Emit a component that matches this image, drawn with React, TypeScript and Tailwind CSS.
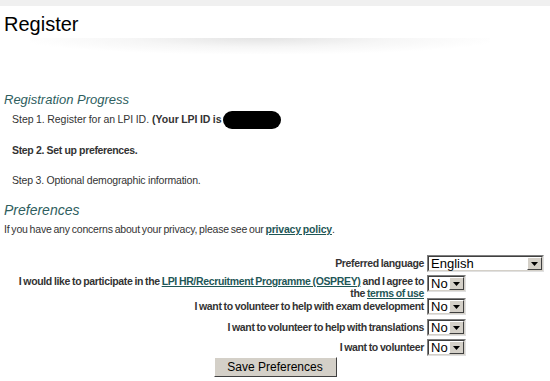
import React from "react";

function Sel({ value, w }: { value: string; w: number }) {
  return (
    <div
      className="flex h-[17px] border border-t-[#808080] border-l-[#808080] border-b-[#e0e0e0] border-r-[#e0e0e0] bg-white font-normal [letter-spacing:0] [word-spacing:0]"
      style={{ width: w }}
    >
      <div className="flex flex-1 items-center border border-t-[#404040] border-l-[#404040] border-b-[#d4d0c8] border-r-[#d4d0c8] pl-[2px] text-[13px] leading-none text-black">
        <span className="flex-1">{value}</span>
        <div className="flex h-full w-[15px] items-center justify-center border border-t-[#ffffff] border-l-[#ffffff] border-b-[#404040] border-r-[#404040] bg-[#d4d0c8]">
          <svg width="7" height="4" viewBox="0 0 7 4">
            <path d="M0 0h7L3.5 4z" fill="#000" />
          </svg>
        </div>
      </div>
    </div>
  );
}

export default function App() {
  const link = "text-[#1f5757] underline";
  return (
    <div className="h-[381px] w-[550px] overflow-hidden bg-white text-[#333] [font-family:'Liberation_Sans',Arial,sans-serif]">
      <div className="h-[6px] bg-[#f0f0f0]" />
      <div className="flex h-[32px] items-center pl-[4px] pt-[3px] text-[20px] text-black">Register</div>
      <div className="ml-[30px] h-[16px] w-[460px] bg-[radial-gradient(ellipse_at_top,#e4e4e4_0%,#f6f6f6_40%,#ffffff_75%)]" />

      <div className="mt-[38px] h-[16px] pl-[4px] text-[13px] italic leading-[16px] text-[#2e5e5e]">
        Registration Progress
      </div>
      <div className="mt-[4px] flex h-[16px] items-center pl-[12px] text-[10.5px] [word-spacing:-0.5px]">
        <span>Step 1. Register for an LPI ID. </span>
        <span className="ml-[3px] font-bold">(Your LPI ID is</span>
        <span className="ml-[1px] inline-block h-[18px] w-[58px] rounded-[9px] bg-black" />
      </div>
      <div className="mt-[14px] h-[16px] pl-[12px] text-[10.5px] font-bold leading-[16px] tracking-[-0.35px]">
        Step 2. Set up preferences.
      </div>
      <div className="mt-[14px] h-[16px] pl-[12px] text-[10.5px] leading-[16px] tracking-[-0.2px]">
        Step 3. Optional demographic information.
      </div>

      <div className="mt-[14px] h-[16px] pl-[4px] text-[14px] italic leading-[16px] text-[#2e5e5e]">
        Preferences
      </div>
      <div className="mt-[4px] h-[14px] pl-[4px] text-[10.5px] leading-[14px] tracking-[-0.2px] [word-spacing:-0.8px]">
        If you have any concerns about your privacy, please see our{" "}
        <span className={"font-bold " + link}>privacy policy</span>.
      </div>

      <div className="mt-[19px] grid grid-cols-[424px_auto] gap-x-[3px] text-[10.5px] font-bold tracking-[-0.35px] [word-spacing:-0.6px]">
        <div className="flex h-[17px] items-center justify-end">Preferred language</div>
        <Sel value="English" w={117} />

        <div className="mt-[3px] text-right leading-[12px] whitespace-nowrap">
          I would like to participate in the{" "}
          <span className={link}>LPI HR/Recruitment Programme (OSPREY)</span> and I agree to
          <br />
          the <span className={link}>terms of use</span>
        </div>
        <div className="mt-[3px]">
          <Sel value="No" w={39} />
        </div>

        <div className="-mt-[1px] flex h-[17px] items-center justify-end">
          I want to volunteer to help with exam development
        </div>
        <div className="-mt-[1px]">
          <Sel value="No" w={39} />
        </div>

        <div className="mt-[4px] flex h-[17px] items-center justify-end">
          I want to volunteer to help with translations
        </div>
        <div className="mt-[4px]">
          <Sel value="No" w={39} />
        </div>

        <div className="mt-[3px] flex h-[17px] items-center justify-end">I want to volunteer</div>
        <div className="mt-[3px]">
          <Sel value="No" w={39} />
        </div>
      </div>

      <div className="mt-[1px] flex justify-center">
        <div className="flex h-[20px] w-[123px] items-center justify-center border border-t-white border-l-white border-b-[#404040] border-r-[#404040] bg-[#d4d0c8] text-[12px] text-black">
          Save Preferences
        </div>
      </div>
    </div>
  );
}
